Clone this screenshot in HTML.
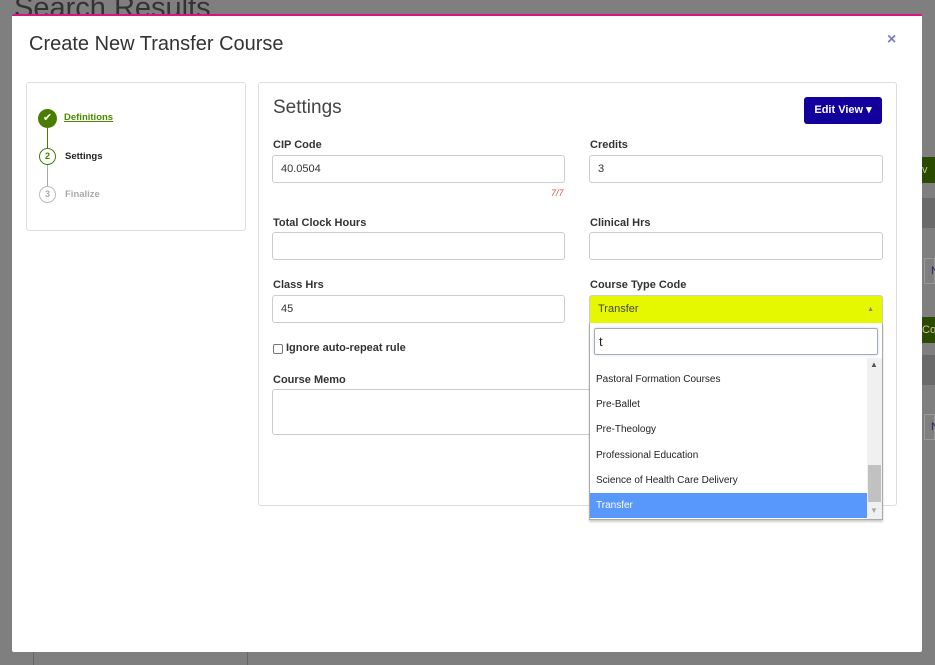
<!DOCTYPE html>
<html><head><style>
*{box-sizing:border-box;margin:0;padding:0}
body{width:935px;height:665px;background:#7f7f7f;position:relative;overflow:hidden;font-family:"Liberation Sans",Arial,sans-serif;color:#333}
.a{position:absolute}
.lbl{position:absolute;font-size:11px;font-weight:bold;color:#333}
.inp{position:absolute;border:1px solid #ccc;border-radius:3px;background:#fff;font-size:11px;padding-left:8px;display:flex;align-items:center;color:#333}
.item{position:absolute;left:0;width:277px;height:25px;font-size:10px;padding-left:6px;display:flex;align-items:center;color:#222}
</style></head><body>
<div class="a" style="left:14px;top:-8px;font-size:29px;color:#333;font-weight:300">Search Results</div>
<div class="a" style="left:922px;top:157px;width:13px;height:26px;background:#2a4a00;color:#c8c890;font-size:11px;line-height:26px;overflow:hidden">v U</div>
<div class="a" style="left:922px;top:198px;width:13px;height:30px;background:#6a6a6a"></div>
<div class="a" style="left:924px;top:258px;width:11px;height:26px;border:1px solid #999;color:#2a1a6a;font-size:11px;line-height:24px;padding-left:6px">N</div>
<div class="a" style="left:922px;top:317px;width:13px;height:26px;background:#2a4a00;color:#c8c890;font-size:11px;line-height:26px;overflow:hidden">Cou</div>
<div class="a" style="left:922px;top:355px;width:13px;height:30px;background:#6a6a6a"></div>
<div class="a" style="left:924px;top:414px;width:11px;height:26px;border:1px solid #999;color:#2a1a6a;font-size:11px;line-height:24px;padding-left:6px">N</div>
<div class="a" style="left:33px;top:652px;width:1px;height:13px;background:#666"></div>
<div class="a" style="left:247px;top:652px;width:1px;height:13px;background:#666"></div>

<div class="a" style="left:12px;top:14px;width:910px;height:638px;background:#fff;border-top:2px solid #d6157f;border-radius:2px"></div>
<div class="a" style="left:29px;top:33px;font-size:20px;color:#333">Create New Transfer Course</div>
<div class="a" style="left:887px;top:31px;font-size:16px;color:#7b7bbf;font-weight:bold">×</div>

<div class="a" style="left:26px;top:82px;width:220px;height:149px;border:1px solid #ddd;border-radius:3px"></div>
<div class="a" style="left:38px;top:109px;width:19px;height:19px;border-radius:50%;background:#4a7c00;color:#fff;font-size:11px;text-align:center;line-height:19px">✔</div>
<div class="a" style="left:64px;top:112px;font-size:9.5px;font-weight:bold;color:#4a8c00;text-decoration:underline">Definitions</div>
<div class="a" style="left:47px;top:128px;width:1px;height:20px;background:#4a7c00"></div>
<div class="a" style="left:39px;top:148px;width:17px;height:17px;border-radius:50%;border:1.5px solid #4a7c00;color:#4a7c00;font-size:9px;font-weight:bold;text-align:center;line-height:14px">2</div>
<div class="a" style="left:65px;top:151px;font-size:9.5px;font-weight:bold;color:#222">Settings</div>
<div class="a" style="left:47px;top:165px;width:1px;height:21px;background:#aaa"></div>
<div class="a" style="left:39px;top:186px;width:17px;height:17px;border-radius:50%;border:1.5px solid #bbb;color:#aaa;font-size:9px;font-weight:bold;text-align:center;line-height:14px">3</div>
<div class="a" style="left:65px;top:189px;font-size:9.5px;font-weight:bold;color:#aaa">Finalize</div>

<div class="a" style="left:258px;top:82px;width:639px;height:424px;border:1px solid #ddd;border-radius:3px"></div>
<div class="a" style="left:273px;top:97px;font-size:19px;color:#444">Settings</div>
<div class="a" style="left:804px;top:97px;width:78px;height:27px;background:#13009c;border-radius:3px;color:#fff;font-size:11px;font-weight:bold;text-align:center;line-height:27px">Edit View ▾</div>

<div class="lbl" style="left:273px;top:139px">CIP Code</div>
<div class="inp" style="left:272px;top:155px;width:293px;height:28px">40.0504</div>
<div class="a" style="left:551px;top:188px;font-size:9px;font-style:italic;color:#d9534f">7/7</div>
<div class="lbl" style="left:590px;top:139px">Credits</div>
<div class="inp" style="left:589px;top:155px;width:294px;height:28px">3</div>

<div class="lbl" style="left:273px;top:217px">Total Clock Hours</div>
<div class="inp" style="left:272px;top:232px;width:293px;height:28px"></div>
<div class="lbl" style="left:590px;top:217px">Clinical Hrs</div>
<div class="inp" style="left:589px;top:232px;width:294px;height:28px"></div>

<div class="lbl" style="left:273px;top:279px">Class Hrs</div>
<div class="inp" style="left:272px;top:295px;width:293px;height:28px">45</div>
<div class="lbl" style="left:590px;top:279px">Course Type Code</div>

<div class="a" style="left:273px;top:344px;width:10px;height:10px;border:1px solid #777;border-radius:2px"></div>
<div class="lbl" style="left:286px;top:342px">Ignore auto-repeat rule</div>
<div class="lbl" style="left:273px;top:374px">Course Memo</div>
<div class="inp" style="left:272px;top:389px;width:330px;height:46px"></div>

<div class="a" style="left:589px;top:295px;width:294px;height:29px;background:#e5f800;border:1px solid #ccc;border-radius:3px 3px 0 0;font-size:11px;padding-left:8px;line-height:27px;color:#444">Transfer<span style="position:absolute;right:8px;top:0;font-size:7px;color:#888">▲</span></div>
<div class="a" style="left:589px;top:323px;width:294px;height:197px;background:#fff;border:1px solid #aaa;border-top:none;box-shadow:0 2px 2px rgba(0,0,0,.2)">
 <div class="a" style="left:4px;top:5px;width:284px;height:27px;border:1px solid #aaa;border-radius:2px;box-shadow:0 0 3px #cde;font-size:13px;padding-left:4px;line-height:25px;color:#222">t</div>
 <div class="a" style="left:0;top:35px;width:292px;height:161px;overflow:hidden">
  <div class="item" style="top:-16px">Pastoral Care</div>
  <div class="item" style="top:9px">Pastoral Formation Courses</div>
  <div class="item" style="top:34px">Pre-Ballet</div>
  <div class="item" style="top:59px">Pre-Theology</div>
  <div class="item" style="top:85px">Professional Education</div>
  <div class="item" style="top:110px">Science of Health Care Delivery</div>
  <div class="item" style="top:135px;background:#5897fb;color:#fff">Transfer</div>
  <div class="a" style="left:277px;top:0;width:15px;height:161px;background:#f0f0f0"></div>
  <div class="a" style="left:278px;top:107px;width:13px;height:37px;background:#c1c1c1"></div>
  <div class="a" style="left:280px;top:2px;font-size:8px;color:#555">▲</div>
  <div class="a" style="left:280px;top:148px;font-size:8px;color:#aaa">▼</div>
 </div>
</div>
</body></html>
